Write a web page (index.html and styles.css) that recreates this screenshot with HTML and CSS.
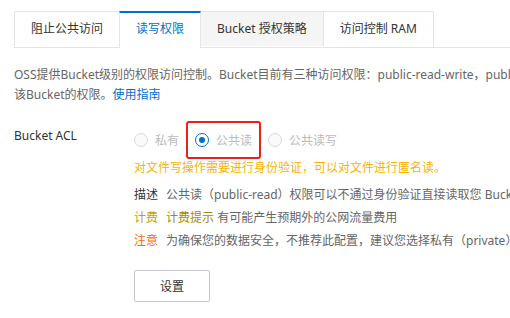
FILE: index.html
```html
<!DOCTYPE html>
<html lang="zh-CN">
<head>
    <meta charset="UTF-8">
    <meta name="viewport" content="width=device-width, initial-scale=1.0">
    <title>读写权限</title>
    <link rel="stylesheet" href="styles.css">
</head>
<body>
    <div class="tabs">
        <div class="tab">阻止公共访问</div>
        <div class="tab active">读写权限</div>
        <div class="tab grey">Bucket 授权策略</div>
        <div class="tab">访问控制 RAM</div>
    </div>

    <p class="intro">
        OSS提供Bucket级别的权限访问控制。Bucket目前有三种访问权限：public-read-write，public-read 和 private。您可以根据需要修改<br>
        该Bucket的权限。<a href="#">使用指南</a>
    </p>

    <div class="form-row">
        <div class="form-label">Bucket ACL</div>
        <div class="form-body">
            <div class="radios">
                <label class="radio"><span class="dot"></span>私有</label>
                <label class="radio checked highlight"><span class="dot"></span>公共读</label>
                <label class="radio"><span class="dot"></span>公共读写</label>
            </div>
            <div class="hint">对文件写操作需要进行身份验证，可以对文件进行匿名读。</div>
            <ul class="notes">
                <li><b class="k-desc">描述</b>公共读（public-read）权限可以不通过身份验证直接读取您 Bucket 中的数据</li>
                <li><b class="k-fee">计费</b><span class="fee-tip">计费提示</span> 有可能产生预期外的公网流量费用</li>
                <li><b class="k-warn">注意</b>为确保您的数据安全，不推荐此配置，建议您选择私有（private）</li>
            </ul>
            <button type="button" class="btn">设置</button>
        </div>
    </div>
</body>
</html>
```

FILE: styles.css
```css
body {
    margin: 0;
    padding: 11px 0 0 14px;
    font-family: "Noto Sans", "Noto Sans CJK SC", sans-serif;
    font-size: 12px;
    color: #666;
    background: #fff;
    overflow: hidden;
}
.tabs {
    display: flex;
    border-bottom: 1px solid #e5e5e5;
}
.tab {
    height: 34px;
    line-height: 34px;
    padding: 0 16px;
    border: 1px solid #e5e5e5;
    border-bottom: none;
    margin-left: -1px;
    color: #333;
    background: #fff;
    white-space: nowrap;
}
.tab:first-child {
    margin-left: 0;
}
.tab.grey {
    background: #f5f5f5;
}
.tab.active {
    color: #0070cc;
    border-top: 2px solid #0070cc;
    line-height: 32px;
    margin-bottom: -1px;
    padding-bottom: 1px;
    position: relative;
}
.intro {
    margin: 17px 0 0;
    line-height: 20px;
    width: 900px;
}
.intro a {
    color: #0070cc;
    text-decoration: none;
}
.form-row {
    display: flex;
    margin-top: 21px;
}
.form-label {
    width: 120px;
    flex: none;
    color: #333;
    line-height: 20px;
    padding-top: 0;
}
.form-body {
    width: 700px;
}
.radios {
    display: flex;
    gap: 16px;
    height: 28px;
    align-items: center;
}
.radio {
    display: flex;
    align-items: center;
    gap: 7px;
    color: #bbb;
}
.dot {
    width: 12px;
    height: 12px;
    border: 1px solid #d9d9d9;
    border-radius: 50%;
    background: #fafafa;
    position: relative;
}
.checked .dot {
    border-color: #0070cc;
    background: #fff;
}
.checked .dot::after {
    content: "";
    position: absolute;
    left: 3px;
    top: 3px;
    width: 6px;
    height: 6px;
    border-radius: 50%;
    background: #0070cc;
}
.highlight {
    padding: 8px 7px;
    margin: -10px -9px;
    border: 2px solid #e8221b;
    border-radius: 3px;
}
.hint {
    color: #f8b400;
    line-height: 20px;
    margin-top: 4px;
}
.notes {
    list-style: none;
    margin: 5px 0 0;
    padding: 0;
    white-space: nowrap;
}
.notes li {
    line-height: 23px;
}
.notes b {
    font-weight: normal;
    margin-right: 8px;
}
.k-desc {
    color: #333;
}
.k-fee {
    color: #c9a100;
}
.fee-tip {
    color: #a88a00;
}
.k-warn {
    color: #ff6a00;
}
.btn {
    margin-top: 18px;
    width: 76px;
    height: 32px;
    background: #fff;
    border: 1px solid #c4c6cc;
    border-radius: 2px;
    color: #333;
    font-family: inherit;
    font-size: 12px;
}
```
